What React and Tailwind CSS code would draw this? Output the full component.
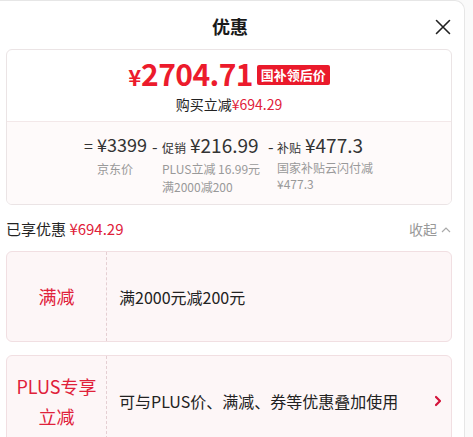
export default function App() {
  const font = { fontFamily: '"Noto Sans CJK SC", "Noto Sans", sans-serif' };
  return (
    <div className="w-[473px] h-[437px] bg-[#fafafa] overflow-hidden" style={font}>
      <div className="w-[465px] h-[437px] bg-white border-r border-t border-[#e6e6e6] rounded-tr-[10px] overflow-hidden">
        {/* header */}
        <div className="relative h-[48px] flex items-center justify-center">
          <span className="text-[18px] font-bold text-[#1a1a1a] leading-none mt-[2px] -ml-[4px]">优惠</span>
          <svg className="absolute right-[13px] top-[18px]" width="16" height="16" viewBox="0 0 16 16" fill="none" stroke="#222" strokeWidth="1.6" strokeLinecap="round">
            <path d="M1.5 1.5 L14.5 14.5 M14.5 1.5 L1.5 14.5" />
          </svg>
        </div>

        <div className="pl-[6px] pr-[12px]">
          {/* summary card */}
          <div className="border border-[#ebe4e5] rounded-[6px] overflow-hidden">
            <div className="h-[71px] flex flex-col items-center pt-[9px]">
              <div className="flex items-center h-[28px] leading-[28px]">
                <span className="text-[#ec1b2c] font-bold text-[22px] mt-[5px]">¥</span>
                <span className="text-[#ec1b2c] font-bold text-[30px] tracking-[-0.6px]">2704.71</span>
                <span className="ml-[4px] mt-[3px] bg-[#ea1a2b] text-white text-[13px] leading-none font-bold rounded-[2px] px-[4px] h-[20px] flex items-center">国补领后价</span>
              </div>
              <div className="text-[14px] leading-none mt-[10px] text-[#222]">
                购买立减<span className="text-[#e0213a]">¥694.29</span>
              </div>
            </div>
            <div className="border-t border-[#f3e8e9] bg-[#fefafa] h-[83px] pt-[13px] flex text-[#333]">
              <div className="ml-[77px] w-[68px]">
                <div className="flex items-baseline leading-none">
                  <span className="text-[16px] w-[13px]">=</span>
                  <span className="text-[18px]">¥3399</span>
                </div>
                <div className="ml-[13px] text-[12px] text-[#999] mt-[7px] leading-[18px]">京东价</div>
              </div>
              <div className="w-[116px]">
                <div className="flex items-baseline leading-none">
                  <span className="text-[16px] w-[10px]">-</span>
                  <span className="text-[12px] mr-[4px]">促销</span>
                  <span className="text-[19px]">¥216.99</span>
                </div>
                <div className="ml-[10px] text-[12px] text-[#999] mt-[6px] leading-[18px]">
                  <div>PLUS立减 16.99元</div>
                  <div>满2000减200</div>
                </div>
              </div>
              <div>
                <div className="flex items-baseline leading-none">
                  <span className="text-[16px] w-[9px]">-</span>
                  <span className="text-[12px] mr-[4px]">补贴</span>
                  <span className="text-[19px]">¥477.3</span>
                </div>
                <div className="ml-[9px] text-[12px] text-[#999] mt-[6px] leading-[16px]">
                  <div>国家补贴云闪付减</div>
                  <div>¥477.3</div>
                </div>
              </div>
            </div>
          </div>

          {/* enjoyed */}
          <div className="flex items-center justify-between h-[46px] pt-[3px]">
            <div className="text-[15px] text-[#222]">
              已享优惠 <span className="text-[#e0213a]">¥694.29</span>
            </div>
            <div className="flex items-center text-[14px] text-[#999] mr-[1px]">
              收起
              <svg className="ml-[4px]" width="10" height="10" viewBox="0 0 10 10" fill="none" stroke="#aaa" strokeWidth="1.2">
                <path d="M1 7 L5 3 L9 7" />
              </svg>
            </div>
          </div>

          {/* card 1 */}
          <div className="flex h-[91px] border border-[#f1dfe2] bg-[#fdf6f7] rounded-[6px]">
            <div className="w-[100px] flex items-center justify-center border-r border-dashed border-[#e5cfd3] text-[#e0213a] text-[18px]">
              满减
            </div>
            <div className="flex-1 flex items-center pl-[12px] text-[16px] text-[#222]">
              满2000元减200元
            </div>
          </div>

          {/* card 2 */}
          <div className="flex h-[100px] mt-[13px] border border-[#f1dfe2] bg-[#fdf6f7] rounded-[6px]">
            <div className="w-[100px] flex flex-col items-center justify-center border-r border-dashed border-[#e5cfd3] text-[#e0213a] text-[18px] leading-[30px] pb-[8px]">
              <span>PLUS专享</span>
              <span>立减</span>
            </div>
            <div className="flex-1 flex items-center pl-[12px] pr-[9px] text-[16px] text-[#222] pb-[8px]">
              <span className="flex-1">可与PLUS价、满减、券等优惠叠加使用</span>
              <svg width="8" height="12" viewBox="0 0 8 12" fill="none" stroke="#d4133a" strokeWidth="2.2" strokeLinecap="round" strokeLinejoin="round">
                <path d="M2 2 L6 6 L2 10" />
              </svg>
            </div>
          </div>
        </div>
      </div>
    </div>
  );
}
